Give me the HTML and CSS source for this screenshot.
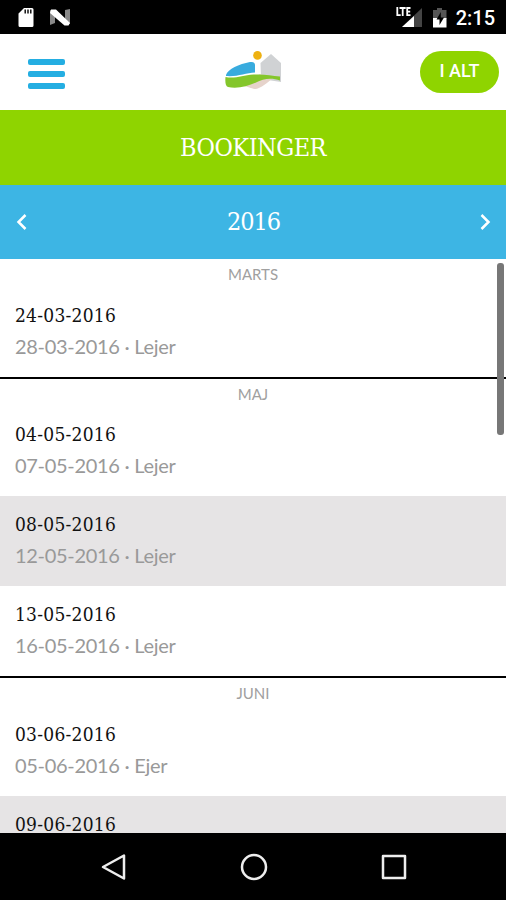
FILE: index.html
```
<!DOCTYPE html>
<html lang="da">
<head>
<meta charset="UTF-8">
<meta name="viewport" content="width=device-width, initial-scale=1.0">
<title>Bookinger</title>
<link rel="stylesheet" href="styles.css">
</head>
<body>
<div class="status-bar">
  <svg width="60" height="34" viewBox="0 0 60 34">
    <path fill="#fff" fill-rule="evenodd" d="M7 8h8q1.500 0 1.500 1.500v16q0 1.500-1.500 1.500H3q-1.500 0-1.500-1.500V13.500zM7.500 9.500v4h1.400v-4zM10.300 9.500v4h1.400v-4zM13.100 9.500v4h1.400v-4z"/>
    <path fill="#888" d="M33 10v15l5-2V13zM53 9v15l-5-2V10z"/>
    <path fill="#fff" d="M34 9.500h5L53 23l-1.500 2.500h-4L33 13z"/>
  </svg>
  <div class="status-right">
    <svg width="56" height="34" viewBox="0 0 56 34">
      <path fill="#444" d="M26 8v19H6z"/>
      <path fill="#fff" d="M18 16v11H6z"/>
      <path fill="none" stroke="#fff" stroke-width="1.800" d="M1.300 7v8.200h3.400M3.500 8h6.200M6.700 8v8M14.500 8h-3.300v7.200h3.300M11 11.600h3.200"/>
      <path fill="#555" d="M41 8h5v2h4.500v9H37v-9h4z"/>
      <path fill="#fff" d="M37 18h13.500v9.500H37z"/>
      <path fill="#000" d="M44.800 12l-4.300 7.500h3V25l4.500-7.500h-3.200z"/>
    </svg>
    <span class="clock">2:15</span>
  </div>
</div>

<header class="header">
  <div class="menu-button">
    <span></span>
    <span></span>
    <span></span>
  </div>
  <svg class="logo" width="60" height="44" viewBox="0 0 60 44">
    <path fill="#d0d2d4" d="M37.500 15L48 6l10 9v19l-20-3z"/>
    <path fill="#e6d3cb" d="M21 34l16-8 13 4c-6 5-12 10-17 11-4 0-6-2-12-3z"/>
    <path fill="#38abde" d="M3 27c2-6 13-11 24-13 4-.5 5 1 5 3v7.500C23 25 14 29 3 28z"/>
    <path fill="#84c62b" d="M2.500 29c10 2 17-2 28-2.500 11-.5 18 1 26.500 2v4c-8-3-17-2-24 2-9 4-19 6.500-28 4.500-2.500-1-3-5-2.500-10z"/>
    <circle cx="34.500" cy="7.400" r="4.300" fill="#eeb111"/>
  </svg>
  <button class="total-button">I ALT</button>
</header>

<h1 class="title">BOOKINGER</h1>

<div class="year-bar">
  <svg width="12" height="18" viewBox="0 0 12 18"><path d="M9.500 2L2.500 9l7 7"/></svg>
  <span>2016</span>
  <svg width="12" height="18" viewBox="0 0 12 18"><path d="M2.500 2l7 7-7 7"/></svg>
</div>

<main class="bookings">
  <section class="month">
    <h2>MARTS</h2>
    <div class="booking">
      <div class="from">24-03-2016</div>
      <div class="to">28-03-2016 · Lejer</div>
    </div>
  </section>
  <section class="month">
    <h2>MAJ</h2>
    <div class="booking">
      <div class="from">04-05-2016</div>
      <div class="to">07-05-2016 · Lejer</div>
    </div>
    <div class="booking">
      <div class="from">08-05-2016</div>
      <div class="to">12-05-2016 · Lejer</div>
    </div>
    <div class="booking">
      <div class="from">13-05-2016</div>
      <div class="to">16-05-2016 · Lejer</div>
    </div>
  </section>
  <section class="month">
    <h2>JUNI</h2>
    <div class="booking">
      <div class="from">03-06-2016</div>
      <div class="to">05-06-2016 · Ejer</div>
    </div>
    <div class="booking">
      <div class="from">09-06-2016</div>
      <div class="to"></div>
    </div>
  </section>
  <div class="scrollbar"></div>
</main>

<nav class="nav-bar">
  <svg width="28" height="28" viewBox="0 0 28 28"><path d="M24 2.500v23L3 14z"/></svg>
  <svg width="28" height="28" viewBox="0 0 28 28"><circle cx="14" cy="14" r="12"/></svg>
  <svg width="28" height="28" viewBox="0 0 28 28"><rect x="3" y="3" width="22" height="22"/></svg>
</nav>
</body>
</html>
```

FILE: styles.css
```
* {
  box-sizing: border-box;
}
body {
  margin: 0;
  height: 900px;
  display: flex;
  flex-direction: column;
  overflow: hidden;
  background-color: white;
  font-family: Lato, sans-serif;
}
.status-bar {
  flex: none;
  display: flex;
  justify-content: space-between;
  height: 34px;
  padding: 0 11px 0 17px;
  background-color: black;
  color: white;
}
.status-right {
  display: flex;
  gap: 4px;
}
.clock {
  font: 500 20px/36px Roboto, sans-serif;
}
.header {
  flex: none;
  display: flex;
  align-items: center;
  justify-content: space-between;
  height: 76px;
  padding: 0 7px 0 28px;
}
.menu-button {
  display: flex;
  flex-direction: column;
  gap: 6px;
  width: 58px;
  padding-top: 3px;
}
.menu-button span {
  width: 37px;
  height: 6px;
  border-radius: 2px;
  background-color: #24aee2;
}
.total-button {
  width: 79px;
  height: 42px;
  padding: 0 0 4px;
  border: none;
  border-radius: 21px;
  background-color: #8fd400;
  color: white;
  font: 500 18px Roboto, sans-serif;
}
.logo {
  margin-bottom: 4px;
}
.title,
.year-bar {
  flex: none;
  margin: 0;
  color: white;
  font: 400 25px/76px "Roboto Slab", "DejaVu Serif Condensed", "DejaVu Serif", serif;
}
.title {
  height: 75px;
  background-color: #8fd400;
  text-align: center;
  letter-spacing: -0.5px;
}
.year-bar {
  display: flex;
  align-items: center;
  justify-content: space-between;
  height: 74px;
  padding: 0 15px 0 16px;
  background-color: #3db5e4;
  letter-spacing: -1px;
}
.year-bar path {
  fill: none;
  stroke: white;
  stroke-width: 2.5;
}
.bookings {
  flex: 1;
  min-height: 0;
  position: relative;
  overflow: hidden;
}
.month + .month {
  border-top: 2px solid black;
}
.month h2 {
  height: 27.5px;
  margin: 0;
  color: #a0a0a0;
  font-size: 15px;
  font-weight: 400;
  line-height: 31px;
  text-align: center;
}
.booking {
  height: 90px;
  padding: 14px 15px;
}
.booking:nth-of-type(even) {
  background-color: #e6e4e5;
}
.from {
  color: #111;
  font: 400 19px/29px "Roboto Slab", "DejaVu Serif Condensed", "DejaVu Serif", serif;
  letter-spacing: 0.25px;
}
.to {
  color: #999;
  font-size: 20px;
  line-height: 32px;
  letter-spacing: -0.3px;
}
/* drawn over the list */
.scrollbar {
  position: absolute;
  top: 4px;
  right: 2px;
  width: 7px;
  height: 172px;
  border-radius: 3px;
  background-color: #777;
}
.nav-bar {
  flex: none;
  display: flex;
  align-items: center;
  justify-content: space-between;
  height: 67px;
  padding: 0 98px 0 100px;
  background-color: black;
}
.nav-bar svg {
  fill: none;
  stroke: #eee;
  stroke-width: 2.5;
  stroke-linejoin: round;
}
```
